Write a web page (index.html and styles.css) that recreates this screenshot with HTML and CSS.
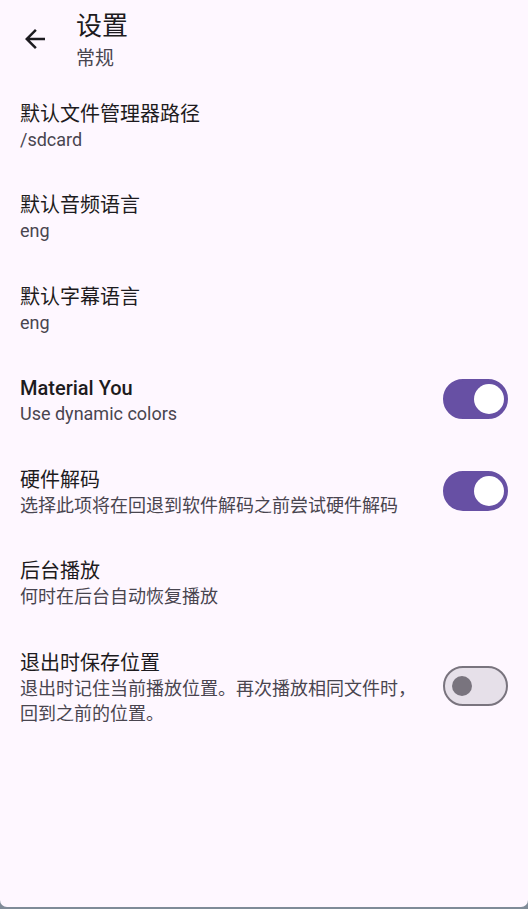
FILE: index.html
```html
<!DOCTYPE html>
<html lang="zh-CN">
<head>
    <meta charset="UTF-8">
    <meta name="viewport" content="width=device-width, initial-scale=1.0">
    <title>设置</title>
    <link rel="stylesheet" href="styles.css">
</head>
<body>
    <div class="screen">
        <div class="app-bar">
            <button class="back-btn" aria-label="返回">
                <svg viewBox="0 0 24 24" width="30" height="30">
                    <path d="M20 11H7.83l5.59-5.59L12 4l-8 8 8 8 1.41-1.41L7.83 13H20v-2z" fill="#1d1b20"/>
                </svg>
            </button>
            <div class="bar-titles">
                <div class="bar-title">设置</div>
                <div class="bar-subtitle">常规</div>
            </div>
        </div>

        <div class="pref">
            <div class="pref-text">
                <div class="pref-title">默认文件管理器路径</div>
                <div class="pref-summary">/sdcard</div>
            </div>
        </div>

        <div class="pref">
            <div class="pref-text">
                <div class="pref-title">默认音频语言</div>
                <div class="pref-summary">eng</div>
            </div>
        </div>

        <div class="pref">
            <div class="pref-text">
                <div class="pref-title">默认字幕语言</div>
                <div class="pref-summary">eng</div>
            </div>
        </div>

        <div class="pref">
            <div class="pref-text">
                <div class="pref-title latin">Material You</div>
                <div class="pref-summary">Use dynamic colors</div>
            </div>
            <div class="switch on"><span class="thumb"></span></div>
        </div>

        <div class="pref">
            <div class="pref-text">
                <div class="pref-title">硬件解码</div>
                <div class="pref-summary">选择此项将在回退到软件解码之前尝试硬件解码</div>
            </div>
            <div class="switch on"><span class="thumb"></span></div>
        </div>

        <div class="pref">
            <div class="pref-text">
                <div class="pref-title">后台播放</div>
                <div class="pref-summary">何时在后台自动恢复播放</div>
            </div>
        </div>

        <div class="pref">
            <div class="pref-text">
                <div class="pref-title">退出时保存位置</div>
                <div class="pref-summary">退出时记住当前播放位置。再次播放相同文件时，回到之前的位置。</div>
            </div>
            <div class="switch"><span class="thumb"></span></div>
        </div>
    </div>
</body>
</html>
```

FILE: styles.css
```css
html, body {
    margin: 0;
    padding: 0;
    height: 100%;
    background-color: #7f8b98;
    font-family: Roboto, "Noto Sans CJK SC", sans-serif;
    overflow: hidden;
}
.screen {
    height: 907px;
    background-color: #fef7ff;
    border-radius: 0 0 7px 7px;
}
.app-bar {
    display: flex;
    align-items: flex-start;
    padding: 9px 20px 7px 20px;
    height: 65px;
}
.back-btn {
    width: 30px;
    height: 30px;
    margin-top: 15px;
    padding: 0;
    border: none;
    background: none;
    display: flex;
}
.bar-titles {
    margin-left: 26px;
}
.bar-title {
    font-size: 26px;
    line-height: 35px;
    color: #1d1b20;
}
.bar-subtitle {
    font-size: 19px;
    line-height: 30px;
    color: #49454f;
}
.pref {
    display: flex;
    align-items: center;
    gap: 24px;
    padding: 20.75px 20px;
}
.pref-text {
    flex: 1;
    min-width: 0;
}
.pref-title {
    font-size: 20px;
    line-height: 25px;
    color: #1d1b20;
}
.pref-title.latin {
    font-weight: 500;
}
.pref-summary {
    font-size: 18px;
    line-height: 25px;
    color: #49454f;
}
.switch {
    box-sizing: border-box;
    width: 65px;
    height: 40px;
    flex-shrink: 0;
    margin-bottom: 4px;
    border-radius: 20px;
    border: 2.5px solid #79747e;
    background-color: #e6e0e9;
    display: flex;
    align-items: center;
    padding-left: 7px;
}
.switch .thumb {
    width: 20px;
    height: 20px;
    border-radius: 50%;
    background-color: #79747e;
}
.switch.on {
    border-color: #6750a4;
    background-color: #6750a4;
    justify-content: flex-end;
    padding: 0 2.5px 0 0;
}
.switch.on .thumb {
    width: 30px;
    height: 30px;
    background-color: #ffffff;
}
```
